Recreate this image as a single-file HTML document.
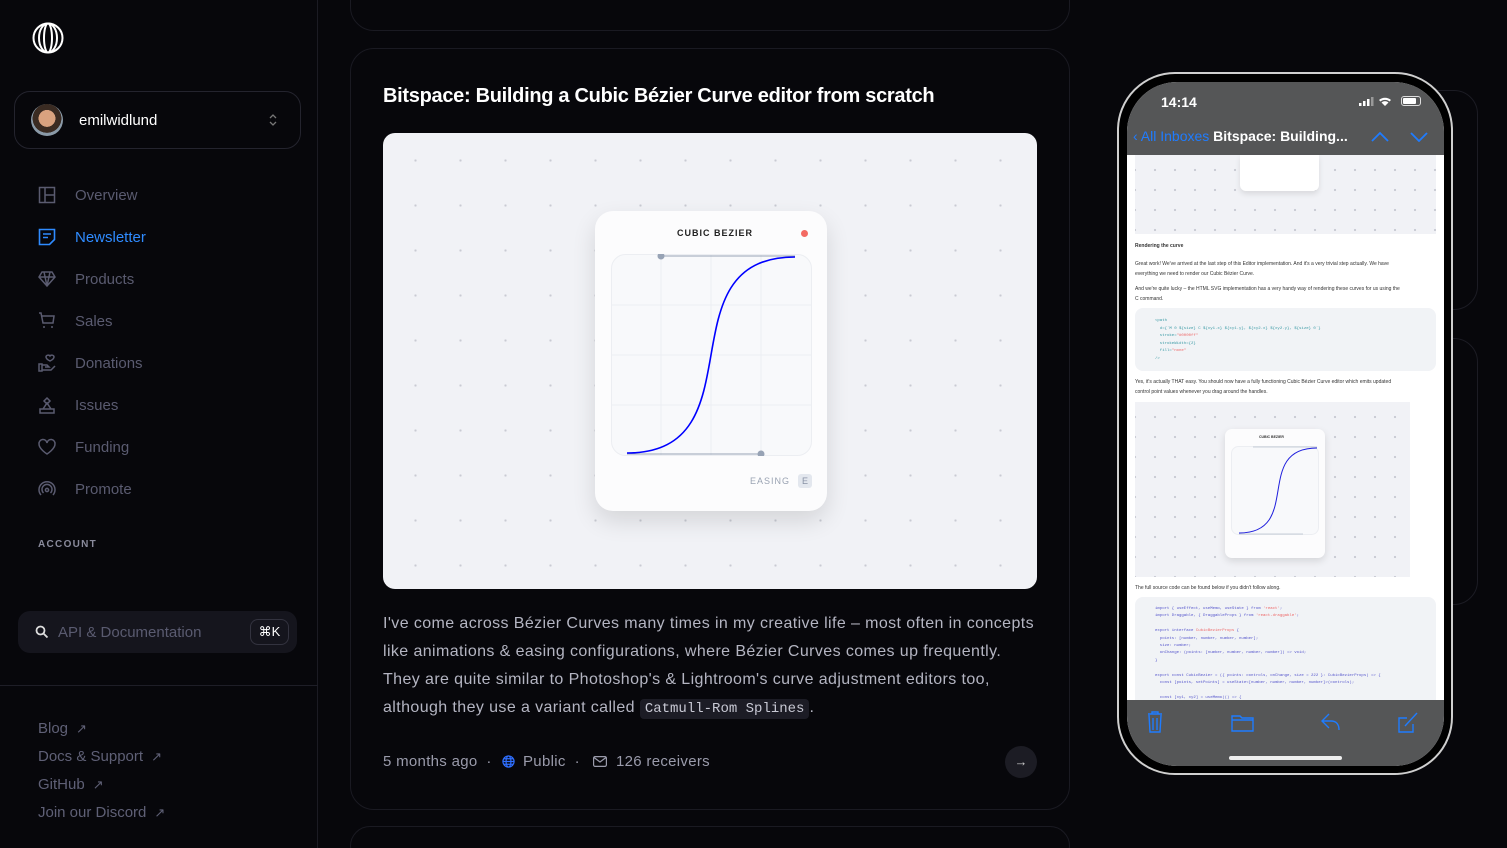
<!DOCTYPE html>
<html><head><meta charset="utf-8"><style>
*{margin:0;padding:0;box-sizing:border-box}
html,body{width:1507px;height:848px;overflow:hidden}
body{background:#07070b;font-family:"Liberation Sans",sans-serif;position:relative;color:#fff}
.a{position:absolute}
.side{left:0;top:0;width:318px;height:848px;border-right:1px solid #1b1b23}
.nav{left:38px;font-size:15px;color:#5a5b70;display:flex;align-items:center;gap:19px}
.nav svg{width:18px;height:18px}
.card{border:1px solid #1a1a22;border-radius:24px}
.dots{background-color:#f1f2f6;background-image:radial-gradient(circle,#c9cbd3 1px,transparent 1.3px);background-size:45px 45px;background-position:10px 5px}
.ln{font-size:16px;color:#b4b5c2;white-space:nowrap;left:383px;letter-spacing:.4px}
.tiny{font-size:5px;color:#333;white-space:nowrap;left:1135px}
.mono{font-family:"Liberation Mono",monospace}
.ext{color:#5f6076;font-size:15px;left:38px}
.ext span{font-size:13px;margin-left:8px}
</style></head><body>
<div class="a side"></div>
<svg class="a" style="left:32px;top:22px" width="32" height="32" viewBox="0 0 32 32" fill="none" stroke="#fff" stroke-width="2"><ellipse cx="16" cy="16" rx="14.5" ry="14.5"/><ellipse cx="16" cy="16" rx="9" ry="14.5"/><ellipse cx="16" cy="16" rx="4" ry="14.5"/></svg>
<div class="a" style="left:14px;top:91px;width:287px;height:58px;border:1px solid #24242e;border-radius:16px"></div>
<div class="a" style="left:31px;top:104px;width:32px;height:32px;border-radius:50%;background:radial-gradient(circle at 50% 45%,#d9a27f 0 35%,#3a2b22 36% 60%,#8a9aa8 61%)"></div>
<div class="a" style="left:79px;top:112px;font-size:15px;color:#fff">emilwidlund</div>
<svg class="a" style="left:268px;top:112px" width="10" height="16" viewBox="0 0 10 16" fill="none" stroke="#777" stroke-width="1.3"><path d="M2 6l3-3 3 3M2 10l3 3 3-3"/></svg>

<div class="a nav" style="top:186px"><svg viewBox="0 0 18 18" fill="none" stroke="#5a5b70" stroke-width="1.5"><rect x="1.5" y="1.5" width="15" height="15"/><path d="M7 1.5v15M7 9h9.5"/></svg>Overview</div>
<div class="a nav" style="top:228px;color:#2f8bff"><svg viewBox="0 0 18 18" fill="none" stroke="#2f8bff" stroke-width="1.6"><path d="M1.5 1.5h15v10l-5 5h-10z"/><path d="M5 6h8M5 9.5h5"/></svg>Newsletter</div>
<div class="a nav" style="top:270px"><svg viewBox="0 0 18 18" fill="none" stroke="#5a5b70" stroke-width="1.5"><path d="M4 2h10l3 5-8 9-8-9zM1 7h16M6 2l3 14 3-14"/></svg>Products</div>
<div class="a nav" style="top:312px"><svg viewBox="0 0 18 18" fill="none" stroke="#5a5b70" stroke-width="1.5"><path d="M1 1h2l2 10h10l1-7H4M6 14v2M14 14v2"/></svg>Sales</div>
<div class="a nav" style="top:354px"><svg viewBox="0 0 18 18" fill="none" stroke="#5a5b70" stroke-width="1.5"><path d="M1 10h3v7H1zM4 16h9l4-4M4 11h5l2 2h-4M12 2c1-1.5 4-1 4 1s-4 4-4 4-4-2-4-4 3-2.5 4-1z"/></svg>Donations</div>
<div class="a nav" style="top:396px"><svg viewBox="0 0 18 18" fill="none" stroke="#5a5b70" stroke-width="1.5"><path d="M2 13h14v4H2zM5 13l4-6 4 6M9 2l3 3-3 3-3-3z"/></svg>Issues</div>
<div class="a nav" style="top:438px"><svg viewBox="0 0 18 18" fill="none" stroke="#5a5b70" stroke-width="1.5"><path d="M9 16S1 11 1 6a4 4 0 018-1 4 4 0 018 1c0 5-8 10-8 10z"/></svg>Funding</div>
<div class="a nav" style="top:480px"><svg viewBox="0 0 18 18" fill="none" stroke="#5a5b70" stroke-width="1.5"><path d="M3 15a8 8 0 1112 0M5.5 13a5 5 0 117 0"/><circle cx="9" cy="10" r="1.6"/></svg>Promote</div>
<div class="a" style="left:38px;top:539px;font-size:10px;letter-spacing:1.3px;color:#8a8b9c;font-weight:bold">ACCOUNT</div>

<div class="a" style="left:18px;top:611px;width:279px;height:42px;background:#15151d;border-radius:12px"></div>
<svg class="a" style="left:35px;top:625px" width="14" height="14" viewBox="0 0 14 14" fill="none" stroke="#ddd" stroke-width="1.8"><circle cx="5.5" cy="5.5" r="4"/><path d="M8.5 8.5l4 4"/></svg>
<div class="a" style="left:58px;top:624px;font-size:15px;color:#5a5b70">API &amp; Documentation</div>
<div class="a" style="left:250px;top:619px;width:39px;height:26px;border:1px solid #33333f;border-radius:8px;font-size:13px;text-align:center;line-height:24px;color:#fff">⌘K</div>
<div class="a" style="left:0;top:685px;width:318px;height:1px;background:#1e1e27"></div>
<div class="a ext" style="top:720px">Blog<span>↗</span></div>
<div class="a ext" style="top:748px">Docs &amp; Support<span>↗</span></div>
<div class="a ext" style="top:776px">GitHub<span>↗</span></div>
<div class="a ext" style="top:804px">Join our Discord<span>↗</span></div>

<div class="a card" style="left:350px;top:-30px;width:720px;height:61px"></div>
<div class="a card" style="left:350px;top:48px;width:720px;height:762px"></div>
<div class="a card" style="left:350px;top:826px;width:720px;height:40px"></div>
<div class="a" style="left:383px;top:85px;font-size:20px;font-weight:bold;letter-spacing:-0.3px;color:#fff">Bitspace: Building a Cubic Bézier Curve editor from scratch</div>
<div class="a dots" style="left:383px;top:133px;width:654px;height:456px;border-radius:12px"></div>
<div class="a" style="left:595px;top:211px;width:232px;height:300px;background:#fcfcfd;border-radius:18px;box-shadow:0 10px 24px rgba(0,0,0,.12)"></div>
<div class="a" style="left:677px;top:228px;font-size:9px;letter-spacing:1px;font-weight:bold;color:#222">CUBIC BEZIER</div>
<div class="a" style="left:801px;top:230px;width:7px;height:7px;border-radius:50%;background:#f36a63"></div>
<svg class="a" style="left:611px;top:254px" width="201" height="202" viewBox="0 0 201 202">
<rect x=".5" y=".5" width="200" height="201" rx="14" fill="#f8f9fb" stroke="#eceef2"/>
<path d="M50 0v202M100 0v202M150 0v202M0 51h201M0 101h201M0 151h201" stroke="#eceef3"/>
<path d="M50 2H184M16 200H150" stroke="#97a3b5" stroke-width="1"/>
<path d="M16 199C150 199 50 3 184 3" fill="none" stroke="#0000ff" stroke-width="1.6"/>
<circle cx="50" cy="2" r="3.5" fill="#97a3b5"/><circle cx="150" cy="200" r="3.5" fill="#97a3b5"/></svg>
<div class="a" style="left:750px;top:476px;font-size:9px;letter-spacing:1px;color:#9aa3b3">EASING</div>
<div class="a" style="left:798px;top:474px;width:14px;height:14px;background:#e3e7ee;border-radius:3px;font-size:9px;color:#8892a5;text-align:center;line-height:14px">E</div>

<div class="a ln" style="top:615px">I've come across Bézier Curves many times in my creative life – most often in concepts</div>
<div class="a ln" style="top:643px">like animations &amp; easing configurations, where Bézier Curves comes up frequently.</div>
<div class="a ln" style="top:671px">They are quite similar to Photoshop's &amp; Lightroom's curve adjustment editors too,</div>
<div class="a ln" style="top:699px">although they use a variant called <span class="mono" style="background:#1c1c25;padding:2px 5px;border-radius:4px;font-size:14px;color:#c8c9d4;letter-spacing:0">Catmull-Rom Splines</span>.</div>
<div class="a" style="left:383px;top:753px;font-size:15px;color:#9a9bab;white-space:nowrap;letter-spacing:.3px">5 months ago &nbsp;·&nbsp;</div>
<svg class="a" style="left:502px;top:755px" width="13" height="13" viewBox="0 0 14 14" fill="none" stroke="#2f6fff" stroke-width="1.3"><circle cx="7" cy="7" r="6"/><ellipse cx="7" cy="7" rx="2.6" ry="6"/><path d="M1 7h12M2 4h10M2 10h10"/></svg>
<div class="a" style="left:523px;top:753px;font-size:15px;color:#9a9bab;white-space:nowrap;letter-spacing:.3px">Public &nbsp;·</div>
<svg class="a" style="left:593px;top:756px" width="14" height="11" viewBox="0 0 14 11" fill="none" stroke="#9a9bab" stroke-width="1.2"><rect x=".6" y=".6" width="12.8" height="9.8" rx="1.5"/><path d="M1 1.5l6 4.5 6-4.5"/></svg>
<div class="a" style="left:616px;top:753px;font-size:15px;color:#9a9bab;white-space:nowrap;letter-spacing:.3px">126 receivers</div>
<div class="a" style="left:1005px;top:746px;width:32px;height:32px;border-radius:50%;background:#1c1c24;color:#ccc;text-align:center;line-height:31px;font-size:13px">→</div>

<div class="a card" style="left:1340px;top:90px;width:138px;height:220px;border-color:#1c1c24"></div>
<div class="a card" style="left:1340px;top:338px;width:138px;height:267px;border-color:#1c1c24"></div>
<div class="a" style="left:1117px;top:72px;width:336px;height:703px;border-radius:58px;background:#000;border:2px solid #cfcfcf"></div>
<div class="a" style="left:1127px;top:82px;width:317px;height:684px;border-radius:50px;overflow:hidden;background:#fff">
 <div class="a" style="left:0;top:0;width:317px;height:73px;background:#555657"></div>
 <div class="a" style="left:34px;top:12px;font-size:14px;font-weight:bold;color:#fff">14:14</div>
 <svg class="a" style="left:232px;top:14px" width="36" height="11" viewBox="0 0 36 11" fill="#fff"><rect x="0" y="7" width="2.5" height="3"/><rect x="4" y="5" width="2.5" height="5"/><rect x="8" y="3" width="2.5" height="7"/><rect x="12" y="1" width="2.5" height="9" fill="#999"/><path d="M20 4a9 9 0 0112 0l-1.5 1.5a7 7 0 00-9 0zM22.5 6.5a5 5 0 017 0L26 10z"/></svg>
 <div class="a" style="left:274px;top:14px;width:20px;height:10px;border:1px solid #ddd;border-radius:3px;padding:1px"><div style="width:13px;height:6px;background:#fff;border-radius:1px"></div></div>
 <div class="a" style="left:6px;top:46px;font-size:14px;color:#1f7cff;white-space:nowrap">‹ All Inboxes <span style="color:#fff;font-weight:bold">Bitspace: Building...</span></div>
 <svg class="a" style="left:244px;top:48px" width="60" height="12" viewBox="0 0 60 12" fill="none" stroke="#1f7cff" stroke-width="1.8"><path d="M1 11l8-8 8 8M40 3l8 8 8-8"/></svg>
 <div class="a dots" style="left:8px;top:73px;width:301px;height:79px;background-size:20px 20px"></div>
 <div class="a" style="left:113px;top:73px;width:79px;height:36px;background:#fff;border-radius:0 0 6px 6px;box-shadow:0 3px 6px rgba(0,0,0,.1)"></div>
 <div class="a dots" style="left:8px;top:320px;width:275px;height:175px;background-size:20px 20px"></div>
 <div class="a" style="left:98px;top:347px;width:100px;height:129px;background:#fcfcfd;border-radius:7px;box-shadow:0 3px 8px rgba(0,0,0,.12)"></div>
 <div class="a" style="left:132px;top:353px;font-size:3.5px;font-weight:bold;color:#333">CUBIC BEZIER</div>
 <svg class="a" style="left:104px;top:364px" width="88" height="90" viewBox="0 0 88 90"><rect x=".5" y=".5" width="87" height="88" rx="7" fill="#f8f9fb" stroke="#eceef2"/><path d="M22 1H86M8 88H72" stroke="#97a3b5" stroke-width=".6"/><path d="M8 87C72 87 22 2 86 2" fill="none" stroke="#2020dd" stroke-width="1"/></svg>
</div>
<div class="a tiny" style="top:243px;font-weight:bold">Rendering the curve</div>
<div class="a tiny" style="top:261px">Great work! We've arrived at the last step of this Editor implementation. And it's a very trivial step actually. We have</div>
<div class="a tiny" style="top:271px">everything we need to render our Cubic Bézier Curve.</div>
<div class="a tiny" style="top:286px">And we're quite lucky – the HTML SVG implementation has a very handy way of rendering these curves for us using the</div>
<div class="a tiny" style="top:296px">C command.</div>
<div class="a" style="left:1135px;top:308px;width:301px;height:63px;background:#f1f3f6;border-radius:8px"></div>
<div class="a tiny mono" style="top:318px;left:1155px;color:#3a9aa5;line-height:7.5px;font-size:4px">&lt;path<br>&nbsp;&nbsp;d={`M 0 ${size} C ${xy1.x} ${xy1.y}, ${xy2.x} ${xy2.y}, ${size} 0`}<br>&nbsp;&nbsp;stroke=<span style="color:#e66">"#0000ff"</span><br>&nbsp;&nbsp;strokeWidth={2}<br>&nbsp;&nbsp;fill=<span style="color:#e66">"none"</span><br>/&gt;</div>
<div class="a tiny" style="top:379px">Yes, it's actually THAT easy. You should now have a fully functioning Cubic Bézier Curve editor which emits updated</div>
<div class="a tiny" style="top:389px">control point values whenever you drag around the handles.</div>
<div class="a tiny" style="top:585px">The full source code can be found below if you didn't follow along.</div>
<div class="a" style="left:1135px;top:597px;width:301px;height:103px;background:#f1f3f6;border-radius:8px 8px 0 0"></div>
<div class="a tiny mono" style="top:606px;left:1155px;color:#5555cc;line-height:7.4px;font-size:4px">import { useEffect, useMemo, useState } from <span style="color:#e66">'react'</span>;<br>import Draggable, { DraggableProps } from <span style="color:#e66">'react-draggable'</span>;<br><br>export interface <span style="color:#e66">CubicBezierProps</span> {<br>&nbsp;&nbsp;points: [number, number, number, number];<br>&nbsp;&nbsp;size: number;<br>&nbsp;&nbsp;onChange: (points: [number, number, number, number]) =&gt; void;<br>}<br><br>export const CubicBezier = ({ points: controls, onChange, size = 222 }: CubicBezierProps) =&gt; {<br>&nbsp;&nbsp;const [points, setPoints] = useState&lt;[number, number, number, number]&gt;(controls);<br><br>&nbsp;&nbsp;const [xy1, xy2] = useMemo(() =&gt; {</div>
<div class="a" style="left:1127px;top:700px;width:317px;height:66px;background:#555657;border-radius:0 0 50px 50px"></div>
<svg class="a" style="left:1145px;top:710px" width="285" height="24" viewBox="0 0 285 24" fill="none" stroke="#1f7cff" stroke-width="1.4"><path d="M3 4h14M7 4V2h6v2M4 5l1 17h10l1-17M8 8v12M12 8v12"/><path d="M87 6h8l2 2h11v13H87z M87 10h21"/><path d="M184 4l-7 7 7 7M177 11h9c5 0 8 3 8 9"/><path d="M262 8h-8v14h14v-8M260 16l12-13"/></svg>
<div class="a" style="left:1229px;top:756px;width:113px;height:4px;background:#eee;border-radius:2px"></div>
</body></html>
